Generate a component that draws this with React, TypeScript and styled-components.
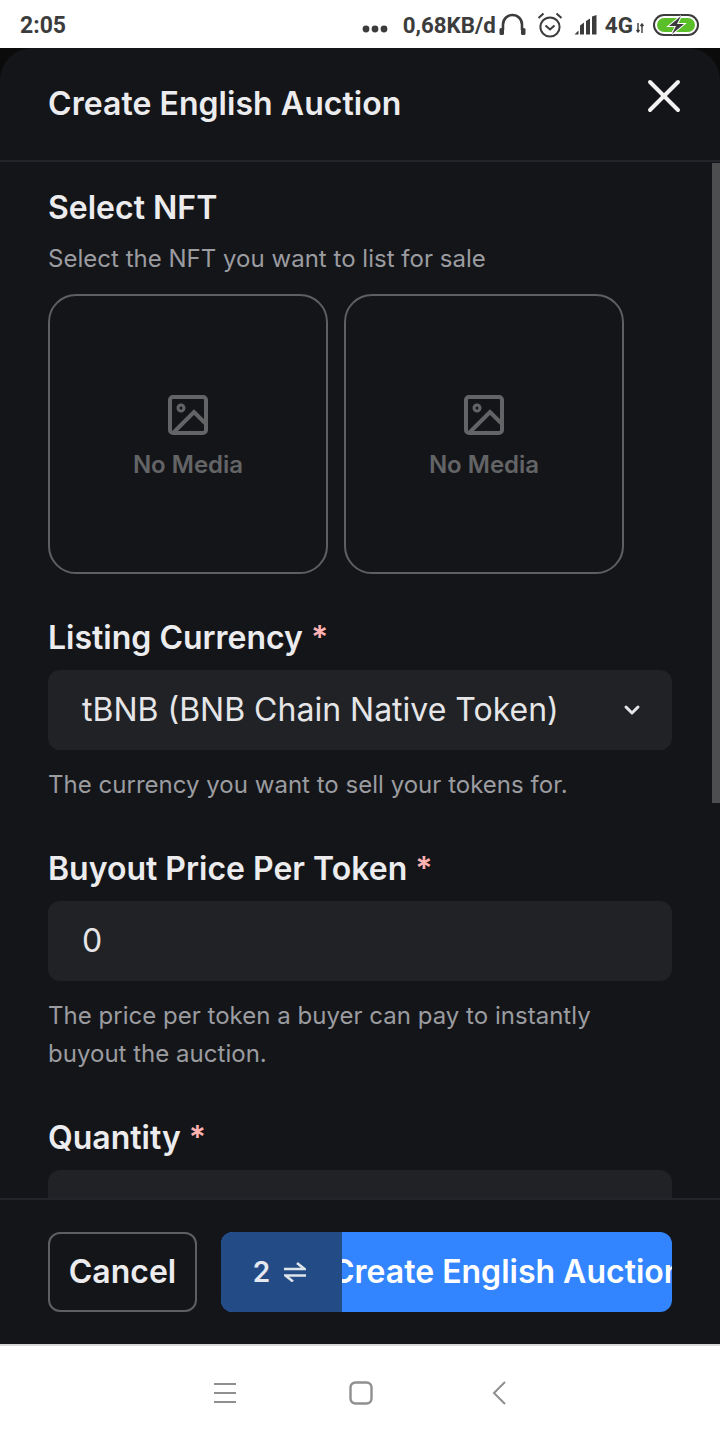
import { createGlobalStyle, styled } from "styled-components";
import { X, ChevronDown } from "lucide-react";

const GlobalStyle = createGlobalStyle`
  html, body {
    margin: 0;
    padding: 0;
    background: #ffffff;
  }
  * {
    box-sizing: border-box;
  }
`;

const Screen = styled.div`
  width: 720px;
  height: 1440px;
  display: flex;
  flex-direction: column;
  font-family: Inter, "Liberation Sans", sans-serif;
  overflow: hidden;
`;

const StatusBar = styled.div`
  height: 48px;
  flex: none;
  background: #ffffff;
  color: #3c3c3c;
  display: flex;
  align-items: center;
  justify-content: space-between;
  padding: 2px 20px 0;
  font-family: Roboto, sans-serif;
  font-weight: 700;
  font-size: 23px;
`;

const StatusRight = styled.div`
  display: flex;
  align-items: center;
`;

const Speed = styled.span`
  font-size: 22.3px;
  font-weight: 700;
  margin: 0 3px 0 15px;
`;

const Backdrop = styled.div`
  flex: 1;
  min-height: 0;
  background: #0b0b0c;
`;

const Modal = styled.div`
  height: 100%;
  background: #141519;
  border-radius: 32px 32px 0 0;
  display: flex;
  flex-direction: column;
`;

const ModalHeader = styled.header`
  height: 114px;
  flex: none;
  border-bottom: 2px solid #22252a;
  display: flex;
  justify-content: space-between;
  padding: 32px 28px 0 48px;
`;

const Title = styled.h1`
  margin: 0;
  font-size: 32px;
  line-height: 48px;
  font-weight: 600;
  letter-spacing: 0.05px;
  color: #ececee;
`;

const CloseIcon = styled(X)`
  color: #f2f2f2;
  margin-top: -12px;
`;

const Body = styled.div`
  position: relative;
  flex: 1;
  min-height: 0;
  overflow: hidden;
  padding: 22px 48px 0;
`;

const ScrollThumb = styled.div`
  position: absolute;
  top: 1px;
  right: 0;
  width: 8px;
  height: 640px;
  background: #4d4e50;
`;

const SectionTitle = styled.h2`
  margin: 0;
  font-size: 32px;
  line-height: 48px;
  font-weight: 600;
  color: #ececee;
`;

const Required = styled.span`
  color: #feb2b2;
  margin-left: 8px;
`;

const Help = styled.p<{ $top: number }>`
  margin: ${(p) => p.$top}px 0 0;
  font-size: 24px;
  line-height: 38px;
  font-weight: 400;
  letter-spacing: 0.02px;
  color: #9b9ca0;
`;

const MediaRow = styled.div`
  display: flex;
  gap: 16px;
  margin-top: 16px;
`;

const MediaCard = styled.div`
  width: 280px;
  height: 280px;
  border: 2px solid #5e5f63;
  border-radius: 28px;
  display: flex;
  flex-direction: column;
  align-items: center;
  justify-content: center;
  gap: 11px;
  color: #636466;
  padding-top: 9px;
`;

const MediaText = styled.span`
  font-size: 24px;
  line-height: 36px;
  font-weight: 600;
`;

const Field = styled.section<{ $top: number }>`
  margin-top: ${(p) => p.$top}px;
`;

const Control = styled.div`
  height: 80px;
  margin-top: 8px;
  padding: 0 28px 2px 34px;
  background: #202226;
  border-radius: 12px;
  display: flex;
  align-items: center;
  justify-content: space-between;
  font-size: 32px;
  color: #e6e6e8;
`;

const ClippedControl = styled(Control)`
  padding-bottom: 0;
`;

const SelectChevron = styled(ChevronDown)`
  margin-top: 2px;
`;

const Footer = styled.footer`
  height: 146px;
  flex: none;
  background: #141519;
  border-top: 2px solid #22252a;
  padding: 32px 48px 0;
  display: flex;
  gap: 24px;
`;

const CancelButton = styled.button`
  width: 149px;
  height: 80px;
  background: transparent;
  border: 2px solid #5e5f63;
  border-radius: 12px;
  color: #ececee;
  font-family: inherit;
  font-size: 32px;
  font-weight: 600;
  padding: 0 0 2px;
`;

const SubmitButton = styled.button`
  position: relative;
  flex: 1;
  height: 80px;
  background: #3385ff;
  border: none;
  border-radius: 12px;
  color: #ffffff;
  font-family: inherit;
  font-size: 32px;
  font-weight: 600;
  overflow: hidden;
  padding: 0 0 2px 110px;
  white-space: nowrap;
  display: flex;
  align-items: center;
`;

const StepBadge = styled.div`
  position: absolute;
  left: 0;
  top: 0;
  bottom: 0;
  width: 121px;
  background: #234c87;
  color: #e6e9ef;
  font-size: 28px;
  display: flex;
  align-items: center;
  justify-content: center;
  gap: 14px;
  padding-right: 4px;
`;

const NavBar = styled.nav`
  height: 96px;
  flex: none;
  background: #ffffff;
  border-top: 2px solid #d8d8d8;
  display: flex;
  align-items: center;
  padding: 0 0 0 214px;
`;

const NavSlot = styled.span<{ $left: number }>`
  display: flex;
  margin-left: ${(p) => p.$left}px;
`;

const ImageIcon = () => (
  <svg width="42" height="42" viewBox="0 0 42 42" fill="none" stroke="currentColor" strokeWidth="4">
    <rect x="3" y="3" width="36" height="36" rx="3" />
    <circle cx="14" cy="14" r="3" strokeWidth="3" />
    <path d="M7 38 L27 18 L38 29" />
  </svg>
);

const Headphones = () => (
  <svg width="27" height="22" viewBox="0 0 27 22" fill="none" stroke="#3c3c3c" strokeWidth="2.6">
    <path d="M4 17V11.5a9.5 9.5 0 0 1 19 0V17" />
    <rect x="0.5" y="15" width="4.5" height="7" rx="1.5" fill="#3c3c3c" stroke="none" />
    <rect x="22" y="15" width="4.5" height="7" rx="1.5" fill="#3c3c3c" stroke="none" />
  </svg>
);

const Alarm = () => (
  <svg width="26" height="26" viewBox="0 0 26 26" fill="none" stroke="#3c3c3c" strokeWidth="2">
    <circle cx="13" cy="15" r="9.6" />
    <path d="M8.5 13.5l4.5 4 4.5-4M1.5 6L6.5 1.5M24.5 6L19.5 1.5" />
  </svg>
);

const Signal = () => (
  <svg width="24" height="20" viewBox="0 0 24 20" fill="#3c3c3c">
    <path d="M0.5 19.5L4.5 15.5V19.5zM6 10.5L10 7.5V19.5H6zM12 6L16 3.5V19.5H12zM18 1.5L22.5 0V19.5H18z" />
  </svg>
);

const Battery = () => (
  <svg width="46" height="22" viewBox="0 0 46 22">
    <rect x="1" y="1" width="44" height="20" rx="10" fill="none" stroke="#3c3c3c" strokeWidth="2" />
    <rect x="4" y="4" width="38" height="14" rx="7" fill="#5bbf2a" />
    <path d="M28 2L16 12h7l-4 8 12-10h-7z" fill="#3c3c3c" stroke="#ffffff" strokeWidth="2" paintOrder="stroke" />
  </svg>
);

const NetworkArrows = () => (
  <svg width="8" height="10" viewBox="0 0 8 10" stroke="#3c3c3c" strokeWidth="1.4" fill="none">
    <path d="M2 0v9M0.5 7l1.5 2 1.5-2M6 10V1M4.5 3L6 1l1.5 2" />
  </svg>
);

const NetworkLabel = styled.span`
  font-size: 22.5px;
  margin: 0 3px 0 7px;
`;

const ArrowsSlot = styled.span`
  display: flex;
  margin-top: 6px;
`;

const SignalSlot = styled.span`
  display: flex;
  margin-left: 11px;
`;

const AlarmSlot = styled.span`
  display: flex;
  margin-left: 11px;
`;

const BatterySlot = styled.span`
  display: flex;
  margin-left: 9px;
  margin-right: 1px;
`;

const HeadphonesSlot = styled.span`
  display: flex;
  margin-top: -2px;
`;

const Dots = () => (
  <svg width="26" height="8" viewBox="0 0 26 8" fill="#3c3c3c">
    <circle cx="4" cy="4" r="3.4" />
    <circle cx="13" cy="4" r="3.4" />
    <circle cx="22" cy="4" r="3.4" />
  </svg>
);

const DotsSlot = styled.span`
  display: flex;
  margin-top: 8px;
`;

const Harpoons = () => (
  <svg width="22" height="20" viewBox="0 0 22 20" fill="none" stroke="#dfe3ea" strokeWidth="2.6">
    <path d="M0 7H20.5L13 1M22 13.5H1.5L9 19.5" />
  </svg>
);

const MenuGlyph = () => (
  <svg width="22" height="22" viewBox="0 0 22 22" stroke="#8f8f8f" strokeWidth="2">
    <path d="M0 2h22M0 11h22M0 20h22" />
  </svg>
);

const HomeGlyph = () => (
  <svg width="24" height="24" viewBox="0 0 24 24" fill="none" stroke="#8f8f8f" strokeWidth="2.4">
    <rect x="1.5" y="1.5" width="21" height="21" rx="5" />
  </svg>
);

const BackGlyph = () => (
  <svg width="14" height="24" viewBox="0 0 14 24" fill="none" stroke="#8f8f8f" strokeWidth="2">
    <path d="M13 1L2 12l11 11" />
  </svg>
);

const App = () => {
  return (
    <Screen>
      <GlobalStyle />
      <StatusBar>
        <span>2:05</span>
        <StatusRight>
          <DotsSlot>
            <Dots />
          </DotsSlot>
          <Speed>0,68KB/d</Speed>
          <HeadphonesSlot>
            <Headphones />
          </HeadphonesSlot>
          <AlarmSlot>
            <Alarm />
          </AlarmSlot>
          <SignalSlot>
            <Signal />
          </SignalSlot>
          <NetworkLabel>4G</NetworkLabel>
          <ArrowsSlot>
            <NetworkArrows />
          </ArrowsSlot>
          <BatterySlot>
            <Battery />
          </BatterySlot>
        </StatusRight>
      </StatusBar>

      <Backdrop>
        <Modal>
          <ModalHeader>
            <Title>Create English Auction</Title>
            <CloseIcon size={56} strokeWidth={1.7} />
          </ModalHeader>

          <Body>
            <ScrollThumb />
            <SectionTitle>Select NFT</SectionTitle>
            <Help $top={8}>Select the NFT you want to list for sale</Help>
            <MediaRow>
              {[0, 1].map((i) => (
                <MediaCard key={i}>
                  <ImageIcon />
                  <MediaText>No Media</MediaText>
                </MediaCard>
              ))}
            </MediaRow>

            <Field $top={40}>
              <SectionTitle>
                Listing Currency<Required>*</Required>
              </SectionTitle>
              <Control>
                tBNB (BNB Chain Native Token)
                <SelectChevron size={24} strokeWidth={3} />
              </Control>
              <Help $top={16}>The currency you want to sell your tokens for.</Help>
            </Field>

            <Field $top={41}>
              <SectionTitle>
                Buyout Price Per Token<Required>*</Required>
              </SectionTitle>
              <Control>0</Control>
              <Help $top={16}>
                The price per token a buyer can pay to instantly
                <br />
                buyout the auction.
              </Help>
            </Field>

            <Field $top={41}>
              <SectionTitle>
                Quantity<Required>*</Required>
              </SectionTitle>
              <ClippedControl>1</ClippedControl>
            </Field>
          </Body>

          <Footer>
            <CancelButton>Cancel</CancelButton>
            <SubmitButton>
              Create English Auction
              <StepBadge>
                2
                <Harpoons />
              </StepBadge>
            </SubmitButton>
          </Footer>
        </Modal>
      </Backdrop>

      <NavBar>
        <MenuGlyph />
        <NavSlot $left={113}>
          <HomeGlyph />
        </NavSlot>
        <NavSlot $left={119}>
          <BackGlyph />
        </NavSlot>
      </NavBar>
    </Screen>
  );
};

export default App;
